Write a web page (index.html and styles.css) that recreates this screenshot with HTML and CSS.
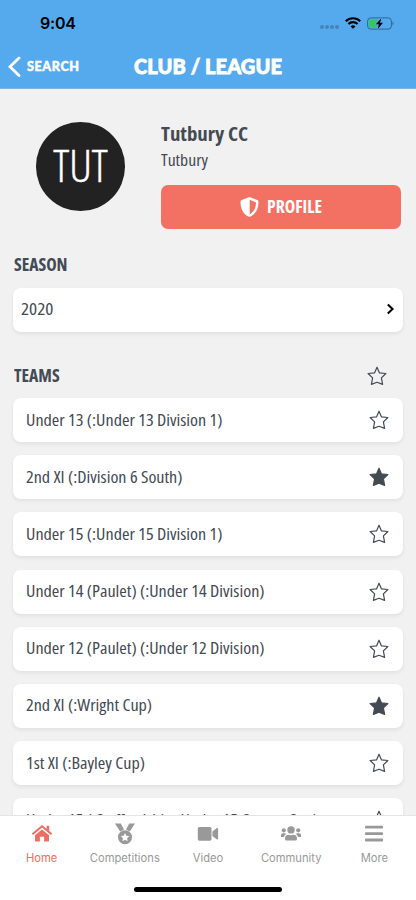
FILE: index.html
```html
<!DOCTYPE html>
<html lang="en">
<head>
<meta charset="utf-8">
<title>Club / League</title>
<link rel="stylesheet" href="styles.css">
</head>
<body>
<svg class="defs" aria-hidden="true">
  <symbol id="star" viewBox="0 0 20 20"><path d="M10 1.2 12.500 6.900 18.900 7.500 14.400 11.900 15.600 18.400 10 16.300 4.400 18.400 5.600 11.900 1.100 7.500 7.500 6.900Z"/></symbol>
</svg>
<div class="app">
  <header class="header">
    <div class="status">
      <span class="time">9:04</span>
      <div class="status-icons">
        <span class="dots"><i></i><i></i><i></i><i></i></span>
        <svg class="wifi" width="16" height="12" viewBox="0 0 16 12"><g fill="none" stroke="#000" stroke-width="2.1"><path d="M.8 4.2a10.2 10.2 0 0 1 14.4 0"/><path d="M3.4 7a6.5 6.5 0 0 1 9.2 0"/></g><path d="M8 11.8 5.6 9.4a3.4 3.4 0 0 1 4.8 0Z"/></svg>
        <svg class="battery" width="27" height="13" viewBox="0 0 27 13"><rect x=".6" y=".9" width="23.8" height="11.2" rx="3.2" fill="none" stroke="#2f6593" stroke-width="1"/><path d="M25.5 4.6c1.4.5 1.4 3.3 0 3.8Z" fill="#2f6593"/><path d="M3.6 2.4H11L8 7.2h2.4L9.8 10.6H3.6a1.5 1.5 0 0 1-1.5-1.5V3.9a1.5 1.5 0 0 1 1.5-1.5Z" fill="#35c759"/><path d="M14.3 1.2 8.8 7.2h3l-1 4.8 5.2-6.2h-3Z" stroke="#55aaee" stroke-width="1.2" paint-order="stroke"/></svg>
      </div>
    </div>
    <nav class="navbar">
      <a class="back"><svg width="13" height="22" viewBox="0 0 13 22"><path d="M11 2 2 10.8 11 19.6" fill="none" stroke="#fff" stroke-width="2.8" stroke-linecap="round"/></svg><span>SEARCH</span></a>
      <h1>CLUB / LEAGUE</h1>
    </nav>
  </header>

  <main class="content">
    <section class="club">
      <div class="avatar"><span>TUT</span></div>
      <div class="club-info">
        <h2>Tutbury CC</h2>
        <p>Tutbury</p>
        <button class="profile"><svg width="19" height="20" viewBox="0 0 19 20"><path fill-rule="evenodd" d="M8.8.3a2 2 0 0 1 1.4 0l7 2.8c.8.3 1.3.9 1.3 1.8 0 7.200-3.200 12.300-8.300 14.800a2 2 0 0 1-1.500 0C3.700 17.300.5 12.100.5 4.900c0-.9.500-1.500 1.300-1.800ZM9.700 2.800v14.400c3.900-2.100 6.300-6.400 6.300-11.800Z" fill="#fff"/></svg><span>PROFILE</span></button>
      </div>
    </section>

    <h3 class="season-title">SEASON</h3>
    <div class="card season"><span>2020</span><svg width="9" height="12" viewBox="0 0 9 12"><path d="M1.800 1.500 6.600 6 1.800 10.500" fill="none" stroke="#000" stroke-width="2"/></svg></div>

    <div class="teams-head"><h3>TEAMS</h3><svg class="star"><use href="#star"/></svg></div>
    <div class="teams">
      <div class="card team"><span>Under 13 (:Under 13 Division 1)</span><svg class="star"><use href="#star"/></svg></div>
      <div class="card team"><span>2nd XI (:Division 6 South)</span><svg class="star on"><use href="#star"/></svg></div>
      <div class="card team"><span>Under 15 (:Under 15 Division 1)</span><svg class="star"><use href="#star"/></svg></div>
      <div class="card team"><span>Under 14 (Paulet) (:Under 14 Division)</span><svg class="star"><use href="#star"/></svg></div>
      <div class="card team"><span>Under 12 (Paulet) (:Under 12 Division)</span><svg class="star"><use href="#star"/></svg></div>
      <div class="card team"><span>2nd XI (:Wright Cup)</span><svg class="star on"><use href="#star"/></svg></div>
      <div class="card team"><span>1st XI (:Bayley Cup)</span><svg class="star"><use href="#star"/></svg></div>
      <div class="card team"><span>Under 15 (:Staffordshire Under 15 County Cup)</span><svg class="star"><use href="#star"/></svg></div>
    </div>
  </main>

  <footer class="tabbar">
    <div class="tabs">
      <a class="tab active"><svg width="22" height="22" viewBox="0 0 22 22"><path d="M11 6.400 18 12.200V17.700a.8.8 0 0 1-.8.8H13.100V13.800H8.900V18.500H4.800a.8.8 0 0 1-.8-.8V12.200Z"/><path d="M1.400 11.200 11 3.200 20.600 11.200" fill="none" stroke="currentColor" stroke-width="2"/><path d="M15.600 2.700H18.200V8.800L15.600 6.600Z"/></svg><span>Home</span></a>
      <a class="tab"><svg width="22" height="22" viewBox="0 0 22 22"><path d="M1 .5H6.800L10 6.400 6.200 8.400Z M21 .5H15.200L12 6.400 15.800 8.400Z"/><path fill-rule="evenodd" d="M11 7.200a7 7 0 1 1 0 14 7 7 0 0 1 0-14Zm0 2.800-1.300 2.700-3 .4 2.200 2.100-.5 3 2.600-1.400 2.600 1.400-.5-3 2.200-2.100-3-.4Z"/></svg><span>Competitions</span></a>
      <a class="tab"><svg width="22" height="22" viewBox="0 0 22 22"><rect x=".8" y="3.900" width="13.700" height="13.800" rx="1.600"/><path d="M15.400 8.600 19.600 5.300c.6-.5 1.500-.1 1.500.7v9.600c0 .8-.9 1.200-1.500.7L15.400 13Z"/></svg><span>Video</span></a>
      <a class="tab"><svg width="22" height="22" viewBox="0 0 22 22"><circle cx="11" cy="6.900" r="3.700"/><circle cx="3.800" cy="7.300" r="2.100"/><circle cx="18.200" cy="7.300" r="2.100"/><path d="M5 15.800c0-2.600 1.300-4 3.500-4 1.400.6 3.600.6 5 0 2.200 0 3.500 1.400 3.500 4 0 1.200-.6 1.800-1.600 1.800H6.600C5.600 17.600 5 17 5 15.800Z"/><path d="M1 13.900v-1.500c0-1.300.8-2.100 2-2.100h1.800c.6 0 1.100.2 1.500.6-1.300.7-2 1.700-2.300 3Z M21 13.900v-1.500c0-1.300-.8-2.100-2-2.100h-1.800c-.6 0-1.100.2-1.500.6 1.300.7 2 1.700 2.300 3Z"/></svg><span>Community</span></a>
      <a class="tab"><svg width="22" height="22" viewBox="0 0 22 22"><rect x="2" y="2.700" width="18" height="2.900" rx=".8"/><rect x="2" y="9.200" width="18" height="2.900" rx=".8"/><rect x="2" y="15.600" width="18" height="2.900" rx=".8"/></svg><span>More</span></a>
    </div>
    <div class="home-indicator"></div>
  </footer>
</div>
</body>
</html>
```
FILE: styles.css
```css
* { box-sizing: border-box; margin: 0; padding: 0; }
body { background: #f1f1f1; font-family: "Open Sans", "Liberation Sans", sans-serif; font-stretch: 75%; color: #444a54; }
svg { display: block; flex: none; }
.defs { position: absolute; width: 0; height: 0; }
.app { width: 416px; height: 900px; display: flex; flex-direction: column; overflow: hidden; }

.header { height: 89px; flex: none; background: #55aaee; border-bottom: 1px solid #7eb5e2; }
.status { height: 46px; padding: 0 22px 0 40px; display: flex; align-items: center; justify-content: space-between; }
.time { font: 600 16px/20px Inter, sans-serif; color: #000; letter-spacing: -.2px; }
.status-icons { display: flex; align-items: center; }
.dots { display: flex; gap: 1px; margin: 8px 6px 0 0; }
.dots i { width: 4px; height: 4px; border-radius: 2px; background: #4385bb; }
.battery { margin-left: 6px; }
.navbar { height: 41px; display: grid; grid-template-columns: 1fr auto 1fr; align-items: center; color: #fff; font-family: Lato, sans-serif; font-weight: 900; }
.back { display: flex; align-items: center; gap: 6px; padding-left: 8px; font-size: 12.5px; letter-spacing: .65px; -webkit-text-stroke: .5px #fff; }
.navbar h1 { font-size: 20px; line-height: 24px; font-weight: 900; letter-spacing: .1px; padding-bottom: 2px; -webkit-text-stroke: .8px #fff; }

.content { flex: 1; min-height: 0; overflow: hidden; padding: 33px 13.5px 0 13px; }
.club { display: flex; height: 108px; }
.avatar { width: 88.5px; height: 88.5px; margin: 0 36.2px 0 23.3px; border-radius: 50%; background: #222; color: #fff; display: flex; align-items: center; justify-content: center; font-size: 44px; font-weight: 300; padding-bottom: 3px; -webkit-text-stroke: .4px #fff; }
.avatar span { transform: scaleX(1.03); }
.club-info { width: 240.5px; }
.club-info h2 { font-size: 20px; line-height: 24px; font-weight: 700; transform: scaleX(1.04); transform-origin: left; }
.club-info p { font-size: 17px; line-height: 24px; margin-top: 2px; transform: scaleX(1.04); transform-origin: left; }
.profile { width: 240.5px; height: 44px; margin-top: 13px; border: 0; border-radius: 7px; background: #f37163; color: #fff; display: flex; align-items: center; justify-content: center; gap: 8px; padding: 0 2px 1px 0; font: inherit; font-size: 17px; font-weight: 700; }
.profile span { transform: scaleX(1.04); transform-origin: left; }
h3 { font-size: 17px; line-height: 24px; font-weight: 700; transform: scaleX(1.035); transform-origin: left; }
.season-title { margin: 23px 0 10.5px 1px; }
.card { height: 44px; border-radius: 8px; background: #fff; box-shadow: 0 2px 4px rgba(0,0,0,.07); display: flex; align-items: center; justify-content: space-between; font-size: 17px; white-space: nowrap; }
.card span { margin-top: -2px; transform: scaleX(1.065); transform-origin: left; }
.season { padding: 0 8px 0 7.5px; }
.season span { transform: scaleX(1.12); }
.season svg { margin-top: -1px; }
.teams-head { display: flex; align-items: center; justify-content: space-between; height: 24px; margin: 32.5px 15.5px 10px 1px; }
.teams { display: grid; gap: 13.2px; }
.team { padding: 0 13.2px; }
.star { width: 20px; height: 20px; fill: none; stroke: #444a54; stroke-width: 1.2; stroke-linejoin: round; }
.star.on { fill: #444a54; }

.tabbar { height: 85px; flex: none; background: #fff; border-top: 1px solid #e4e4e4; }
.tabs { display: grid; grid-template-columns: repeat(5, 1fr); }
.tab { display: flex; flex-direction: column; align-items: center; padding-top: 6.5px; color: #999; }
.tab svg { fill: currentColor; }
.tab span { font: 400 11.2px/16px Inter, sans-serif; margin-top: 5px; }
.tab.active { color: #ee6f62; }
.home-indicator { width: 148px; height: 5px; margin: 21.5px auto 0; border-radius: 3px; background: #000; }
```
